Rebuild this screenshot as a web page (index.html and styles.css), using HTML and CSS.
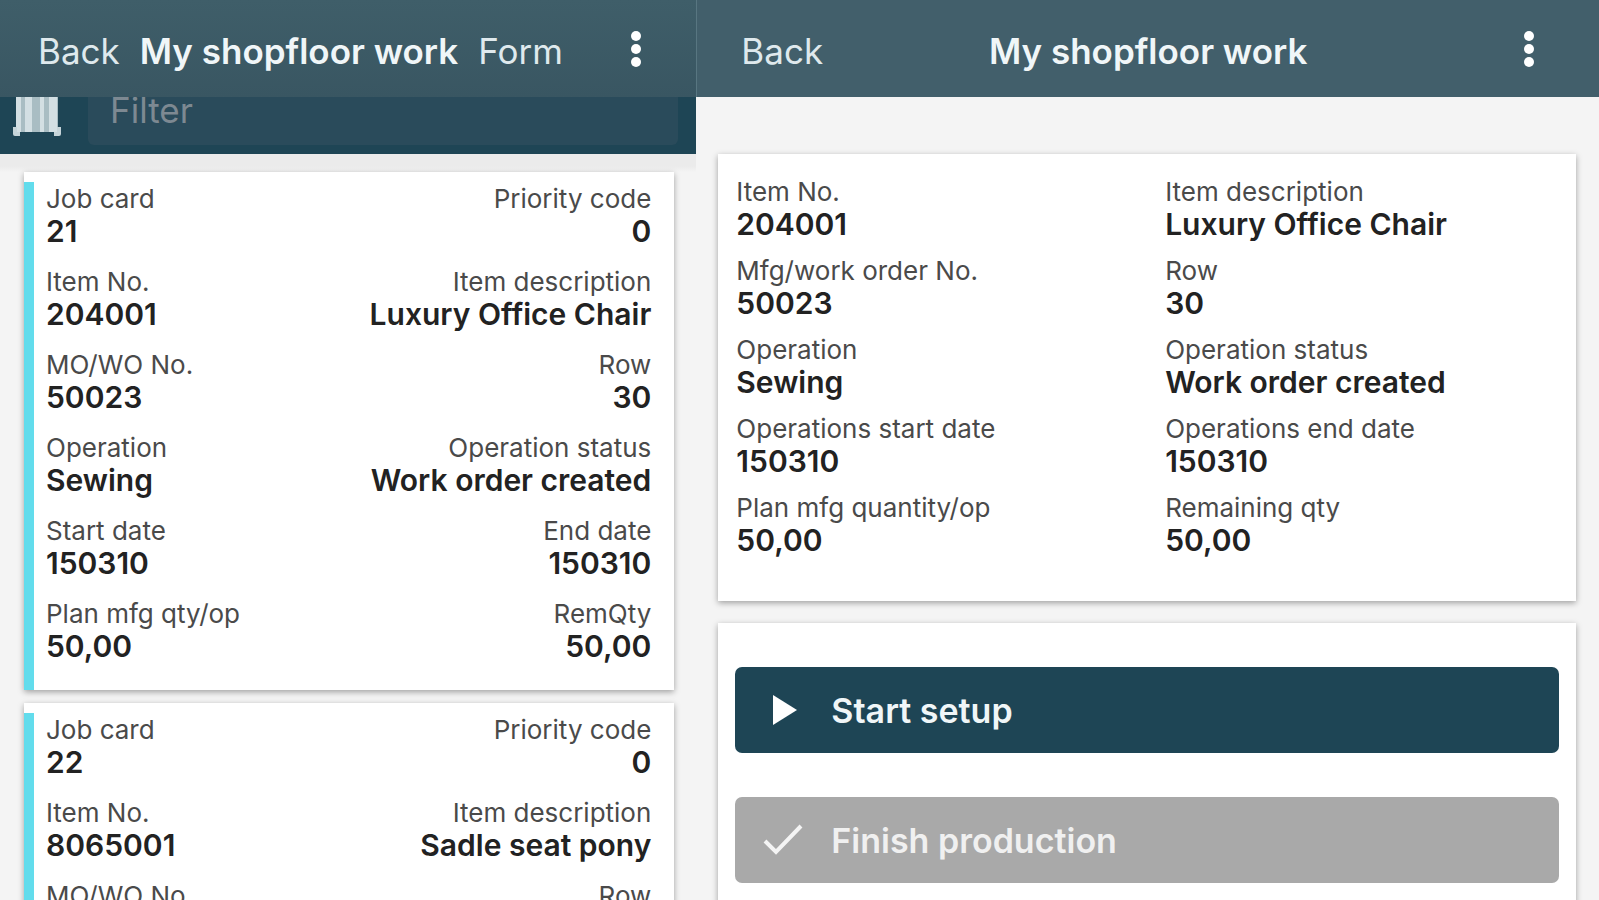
FILE: index.html
```html
<!DOCTYPE html>
<html lang="en">
<head>
    <meta charset="UTF-8">
    <meta name="viewport" content="width=device-width, initial-scale=1.0">
    <title>My shopfloor work</title>
    <link rel="stylesheet" href="styles.css">
</head>
<body>
    <div class="app">
        <section class="pane list-pane">
            <header class="topbar">
                <button class="nav-btn">Back</button>
                <h1>My shopfloor work</h1>
                <button class="nav-btn">Form</button>
                <button class="menu-btn" aria-label="Menu">
                    <svg width="12" height="38" viewBox="0 0 12 38"><circle cx="6" cy="6" r="5"/><circle cx="6" cy="19" r="5"/><circle cx="6" cy="32" r="5"/></svg>
                </button>
            </header>

            <div class="filter-bar">
                <svg class="barcode" width="50" height="64" viewBox="0 0 50 64">
                    <path d="M4 4h42v50H4z" fill="#a9bdc3"/>
                    <path d="M4 4h5v50H4zM13 4h7v50h-7zM28 4h4v50h-4zM37 4h8v50h-8z" fill="#d3dfe3"/>
                    <path d="M3 49v7h5M47 49v7h-5" fill="none" stroke="#c5d4d9" stroke-width="4" stroke-linejoin="round"/>
                </svg>
                <input type="text" class="filter-input" placeholder="Filter" aria-label="Filter">
            </div>

            <main class="job-list">
                <article class="card job-card">
                    <dl class="job-fields">
                        <div class="field"><dt>Job card</dt><dd>21</dd></div>
                        <div class="field"><dt>Priority code</dt><dd>0</dd></div>
                        <div class="field"><dt>Item No.</dt><dd>204001</dd></div>
                        <div class="field"><dt>Item description</dt><dd>Luxury Office Chair</dd></div>
                        <div class="field"><dt>MO/WO No.</dt><dd>50023</dd></div>
                        <div class="field"><dt>Row</dt><dd>30</dd></div>
                        <div class="field"><dt>Operation</dt><dd>Sewing</dd></div>
                        <div class="field"><dt>Operation status</dt><dd>Work order created</dd></div>
                        <div class="field"><dt>Start date</dt><dd>150310</dd></div>
                        <div class="field"><dt>End date</dt><dd>150310</dd></div>
                        <div class="field"><dt>Plan mfg qty/op</dt><dd>50,00</dd></div>
                        <div class="field"><dt>RemQty</dt><dd>50,00</dd></div>
                    </dl>
                </article>

                <article class="card job-card">
                    <dl class="job-fields">
                        <div class="field"><dt>Job card</dt><dd>22</dd></div>
                        <div class="field"><dt>Priority code</dt><dd>0</dd></div>
                        <div class="field"><dt>Item No.</dt><dd>8065001</dd></div>
                        <div class="field"><dt>Item description</dt><dd>Sadle seat pony</dd></div>
                        <div class="field"><dt>MO/WO No.</dt></div>
                        <div class="field"><dt>Row</dt></div>
                    </dl>
                </article>
            </main>
        </section>

        <section class="pane detail-pane">
            <header class="topbar">
                <button class="nav-btn">Back</button>
                <h1>My shopfloor work</h1>
                <button class="menu-btn" aria-label="Menu">
                    <svg width="12" height="38" viewBox="0 0 12 38"><circle cx="6" cy="6" r="5"/><circle cx="6" cy="19" r="5"/><circle cx="6" cy="32" r="5"/></svg>
                </button>
            </header>

            <main class="detail">
                <dl class="card detail-fields">
                    <div class="field"><dt>Item No.</dt><dd>204001</dd></div>
                    <div class="field"><dt>Item description</dt><dd>Luxury Office Chair</dd></div>
                    <div class="field"><dt>Mfg/work order No.</dt><dd>50023</dd></div>
                    <div class="field"><dt>Row</dt><dd>30</dd></div>
                    <div class="field"><dt>Operation</dt><dd>Sewing</dd></div>
                    <div class="field"><dt>Operation status</dt><dd>Work order created</dd></div>
                    <div class="field"><dt>Operations start date</dt><dd>150310</dd></div>
                    <div class="field"><dt>Operations end date</dt><dd>150310</dd></div>
                    <div class="field"><dt>Plan mfg quantity/op</dt><dd>50,00</dd></div>
                    <div class="field"><dt>Remaining qty</dt><dd>50,00</dd></div>
                </dl>

                <div class="card actions">
                    <button class="action-btn">
                        <svg width="40" height="40" viewBox="0 0 40 40"><path d="M10 5l24 15-24 15z" fill="#fff"/></svg>
                        Start setup
                    </button>
                    <button class="action-btn" disabled>
                        <svg width="40" height="40" viewBox="0 0 40 40"><path d="M2 21l11 11L38 6" fill="none" stroke="#f4f4f4" stroke-width="4"/></svg>
                        Finish production
                    </button>
                </div>
            </main>
        </section>
    </div>
</body>
</html>
```
FILE: styles.css
```css
* {
    box-sizing: border-box;
}

body {
    margin: 0;
    font-family: Inter, Roboto, sans-serif;
    background: #f4f4f4;
    color: #222;
}

h1, dl, dd {
    margin: 0;
}

button {
    font-family: inherit;
    border: none;
    cursor: pointer;
}

.app {
    display: grid;
    grid-template-columns: 27fr 35fr;
    height: 100vh;
}

.pane {
    min-width: 0;
    overflow: hidden;
}

/* Top bar */
.topbar {
    position: relative;
    z-index: 1;
    display: flex;
    align-items: center;
    height: 97px;
    padding: 4px 54px 0 38px;
    background: linear-gradient(#3f5e69, #395662);
    color: #f0f6f8;
}

.topbar h1 {
    font-size: 35px;
    font-weight: 600;
    line-height: 40px;
    white-space: nowrap;
}

.nav-btn {
    padding: 0;
    background: none;
    color: #dfe9ed;
    font-size: 35px;
    line-height: 40px;
}

.menu-btn {
    display: flex;
    margin-left: auto;
    padding: 0 0 4px;
    background: none;
    fill: #fff;
}

.list-pane .topbar {
    gap: 20px;
}

.detail-pane .topbar {
    display: grid;
    grid-template-columns: 1fr auto 1fr;
    padding: 4px 44px 0;
    background: #425f6b;
    border-left: 1px solid #587681;
}

.detail-pane .nav-btn {
    justify-self: start;
}

.detail-pane .menu-btn {
    padding-right: 20px;
}

/* Filter */
.filter-bar {
    display: flex;
    align-items: center;
    height: 88px;
    margin-top: -31px;
    padding: 0 18px 0 12px;
    background: #1e4555;
}

.barcode {
    flex: none;
    margin-right: 26px;
}

.filter-input {
    flex: 1;
    min-width: 0;
    height: 70px;
    padding: 0 22px;
    border: none;
    border-radius: 6px;
    background: #2a4b5b;
    color: #fff;
    font-family: inherit;
    font-size: 35px;
}

.filter-input::placeholder {
    color: #7d8992;
}

/* Cards */
.card {
    background: #fff;
    box-shadow: 0 2px 6px rgba(0, 0, 0, 0.35);
}

.field {
    min-height: 66px;
}

.field dt {
    font-size: 26px;
    line-height: 33px;
    color: #4a4a4a;
}

.field dd {
    font-size: 30px;
    font-weight: 600;
    line-height: 33px;
}

.job-list {
    display: flex;
    flex-direction: column;
    gap: 13px;
    padding: 18px 22px 18px 24px;
    background: linear-gradient(#ebebeb 12px, #f4f4f4 18px);
}

.job-card {
    padding-top: 10px;
}

.job-fields {
    display: grid;
    grid-template-columns: auto auto;
    row-gap: 17px;
    padding: 0 23px 27px 12px;
    border-left: 10px solid #62dcec;
}

.job-fields .field:nth-child(even) {
    text-align: right;
}

.detail {
    display: flex;
    flex-direction: column;
    gap: 22px;
    padding: 57px 23px 0 22px;
}

.detail-fields {
    display: grid;
    grid-template-columns: 1fr 1fr;
    gap: 13px 18px;
    padding: 21px 0 44px 18px;
}

.actions {
    display: flex;
    flex-direction: column;
    gap: 44px;
    padding: 44px 17px;
}

.action-btn {
    display: flex;
    align-items: center;
    gap: 28px;
    height: 86px;
    padding: 0 28px;
    border-radius: 7px;
    background: #1e4555;
    color: #f0f6f8;
    font-size: 34px;
    font-weight: 600;
}

.action-btn:disabled {
    background: #a9a9a9;
    color: #f0f0f0;
    cursor: default;
}
```
